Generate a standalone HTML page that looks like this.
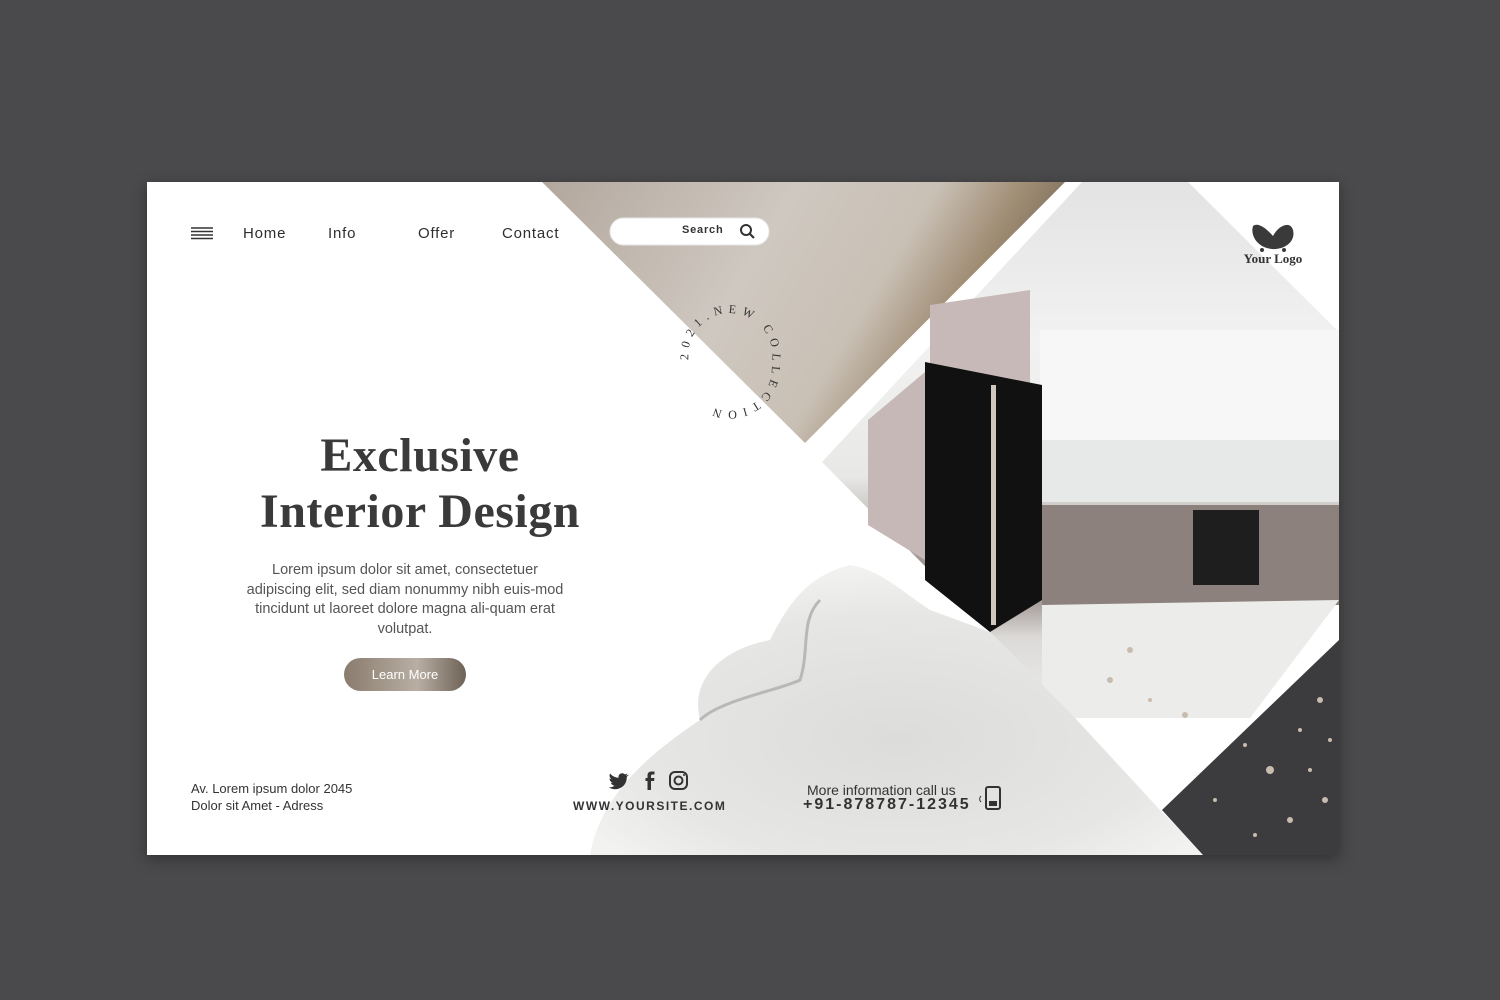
<!DOCTYPE html>
<html><head><meta charset="utf-8"><style>
*{margin:0;padding:0;box-sizing:border-box}
body{width:1500px;height:1000px;background:#4a4a4c;position:relative;overflow:hidden;font-family:"Liberation Sans",sans-serif}
#card{position:absolute;left:147px;top:182px;width:1192px;height:673px;background:#fff;overflow:hidden;box-shadow:0 4px 14px rgba(0,0,0,.35)}
svg{position:absolute;left:0;top:0}
.t{position:absolute;color:#333;white-space:nowrap}
.nav{font-size:15px;letter-spacing:.8px;top:43px;color:#2e2e2e}
</style></head><body>
<div id="card">
<svg width="1192" height="673" viewBox="147 182 1192 673">
<defs>
<linearGradient id="tex" x1="0" y1="0" x2="1" y2="0.3">
<stop offset="0" stop-color="#b2a79d"/><stop offset=".45" stop-color="#cfc8c0"/><stop offset=".7" stop-color="#c9c0b5"/><stop offset=".85" stop-color="#a08d74"/><stop offset="1" stop-color="#6f6253"/></linearGradient>
<linearGradient id="kit" x1="0" y1="0" x2="0" y2="1">
<stop offset="0" stop-color="#e3e3e3"/><stop offset=".3" stop-color="#f2f2f2"/><stop offset=".55" stop-color="#e8e8e6"/><stop offset=".75" stop-color="#8a7f7c"/><stop offset=".85" stop-color="#dcdad8"/><stop offset="1" stop-color="#eeeeee"/></linearGradient>
<radialGradient id="mar" cx=".5" cy=".6" r=".6"><stop offset="0" stop-color="#dcdcda"/><stop offset=".7" stop-color="#e6e6e4"/><stop offset="1" stop-color="#f2f2f1"/></radialGradient>
<linearGradient id="btn" x1="0" x2="1"><stop offset="0" stop-color="#8a7c6e"/><stop offset=".6" stop-color="#b8aea3"/><stop offset="1" stop-color="#6e6256"/></linearGradient>
</defs>
<polygon points="542,182 1065,182 805,443" fill="url(#tex)"/>
<polygon points="822,462 1082,182 1188,182 1339,332 1339,600 1250,718 1075,718 990,632" fill="url(#kit)"/>
<polygon points="930,305 1030,290 1030,390 930,375" fill="#c6b9b7"/>
<polygon points="868,420 925,372 925,560 868,525" fill="#c5b8b6"/>
<rect x="1042" y="505" width="297" height="100" fill="#8c817c"/>
<rect x="1193" y="510" width="66" height="75" fill="#1e1e1e"/>
<rect x="1040" y="330" width="299" height="110" fill="#f7f7f7"/>
<rect x="1040" y="440" width="299" height="62" fill="#e7e9e8"/>
<polygon points="925,362 1042,385 1042,600 990,632 925,580" fill="#111"/>
<rect x="991" y="385" width="5" height="240" fill="#cfc7bb"/>
<polygon points="1042,605 1339,600 1250,718 1075,718 1042,690" fill="#ececea"/>
<path d="M590,855 C600,800 640,760 700,720 C690,680 720,650 770,640 C790,600 810,575 850,565 C880,570 900,590 930,610 L990,632 L1075,718 L1160,810 L1205,855 Z" fill="url(#mar)"/>
<path d="M700,720 C720,700 780,690 800,680 C810,650 800,620 820,600" stroke="#b8b8b6" stroke-width="3" fill="none"/>
<polygon points="1339,640 1339,855 1203,855 1162,810" fill="#3c3c3e"/>
<g fill="#c8bcae">
<circle cx="1320" cy="700" r="3"/><circle cx="1300" cy="730" r="2"/><circle cx="1270" cy="770" r="4"/><circle cx="1325" cy="800" r="3"/><circle cx="1245" cy="745" r="2"/><circle cx="1290" cy="820" r="3"/><circle cx="1215" cy="800" r="2"/><circle cx="1330" cy="740" r="2"/><circle cx="1255" cy="835" r="2"/><circle cx="1310" cy="770" r="2"/>
<circle cx="1130" cy="650" r="3"/><circle cx="1110" cy="680" r="3"/><circle cx="1150" cy="700" r="2"/><circle cx="1185" cy="715" r="3"/>
</g>
<rect x="610" y="218" width="159" height="27" rx="13.5" fill="#fff" stroke="#e6e6e6"/>
<circle cx="746" cy="230" r="5" stroke="#333" stroke-width="2" fill="none"/>
<line x1="750" y1="234" x2="754" y2="238" stroke="#333" stroke-width="2.2"/>
<g stroke="#333" stroke-width="1.4"><line x1="191" y1="228" x2="213" y2="228"/><line x1="191" y1="231.5" x2="213" y2="231.5"/><line x1="191" y1="235" x2="213" y2="235"/><line x1="191" y1="238.5" x2="213" y2="238.5"/></g>
<path d="M1253,226 C1258,222 1266,228 1273,236 C1278,226 1290,220 1293,230 C1296,242 1284,250 1272,249 C1258,248 1250,236 1253,226 Z" fill="#3a3a3a"/>
<circle cx="1262" cy="250" r="2" fill="#3a3a3a"/><circle cx="1284" cy="250" r="2" fill="#3a3a3a"/>
<text x="1273" y="263" font-family="Liberation Serif" font-weight="bold" font-size="13" text-anchor="middle" fill="#333">Your Logo</text>
<path id="circ" d="M688.6,360 A42,42 0 1,1 771.4,364 A42,42 0 1,1 688.6,360" fill="none"/>
<text font-family="Liberation Serif" font-size="12" letter-spacing="5.5" fill="#333"><textPath href="#circ" startOffset="0">2021.NEW COLLECTION</textPath></text>
<rect x="344" y="658" width="122" height="33" rx="16.5" fill="url(#btn)"/>
<text x="405" y="679" text-anchor="middle" font-size="13" fill="#fff" font-family="Liberation Sans">Learn More</text>
<path d="M628,775 c-0.7,0.3 -1.5,0.5 -2.3,0.6 c0.8,-0.5 1.5,-1.3 1.8,-2.2 c-0.8,0.5 -1.7,0.8 -2.6,1 c-1.6,-1.7 -4.4,-1.5 -5.8,0.4 c-0.6,0.9 -0.8,2 -0.5,3 c-3.3,-0.2 -6.4,-1.7 -8.5,-4.3 c-1.1,1.9 -0.5,4.3 1.3,5.5 c-0.7,0 -1.3,-0.2 -1.9,-0.5 c0,2 1.4,3.7 3.3,4.1 c-0.6,0.2 -1.2,0.2 -1.900,0.1 c0.5,1.7 2.1,2.8 3.8,2.9 c-1.7,1.3 -3.9,2 -6.1,1.7 c8.5,5.2 18.6,-0.7 18.2,-10.5 c0.9,-0.6 1.6,-1.4 2.2,-2.3 z" fill="#333"/>
<path d="M651,790 v-9 h3 l0.5,-3 h-3.5 v-2 c0,-1 0.5,-1.5 1.5,-1.5 h2 v-3 h-3 c-3,0 -4,2 -4,4 v2.5 h-2 v3 h2 v9 z" fill="#333"/>
<rect x="670" y="772" width="17" height="17" rx="5" stroke="#333" stroke-width="2" fill="none"/>
<circle cx="678.5" cy="780.5" r="4" stroke="#333" stroke-width="2" fill="none"/><circle cx="684" cy="775" r="1" fill="#333"/>
<rect x="986" y="787" width="14" height="22" rx="2" stroke="#333" stroke-width="2" fill="none"/><rect x="989" y="801" width="8" height="5" fill="#333"/>
<path d="M981,796 a4,4 0 0,0 0,6" stroke="#333" fill="none"/>
</svg>
<div class="t nav" style="left:96px">Home</div>
<div class="t nav" style="left:181px">Info</div>
<div class="t nav" style="left:271px">Offer</div>
<div class="t nav" style="left:355px">Contact</div>
<div class="t" style="left:535px;top:42px;font-size:11px;font-weight:bold;letter-spacing:.8px">Search</div>
<div class="t" style="left:0;width:546px;top:246px;text-align:center;font-family:'Liberation Serif',serif;font-weight:bold;font-size:48px;line-height:56px;color:#3a3a3a;white-space:normal;letter-spacing:.5px">Exclusive<br>Interior Design</div>
<div class="t" style="left:93px;width:330px;top:379px;text-align:center;font-size:14.5px;line-height:19.7px;color:#555;white-space:normal">Lorem ipsum dolor sit amet, consectetuer adipiscing elit, sed diam nonummy nibh euis-mod tincidunt ut laoreet dolore magna ali-quam erat volutpat.</div>
<div class="t" style="left:44px;top:598px;font-size:13px;line-height:17px;color:#333">Av. Lorem ipsum dolor 2045<br>Dolor sit Amet - Adress</div>
<div class="t" style="left:426px;top:617px;font-size:12px;font-weight:bold;letter-spacing:1.5px">WWW.YOURSITE.COM</div>
<div class="t" style="left:660px;top:600px;font-size:14px">More information call us</div>
<div class="t" style="left:656px;top:614px;font-size:16px;font-weight:bold;letter-spacing:2px">+91-878787-12345</div>
</div>
</body></html>
